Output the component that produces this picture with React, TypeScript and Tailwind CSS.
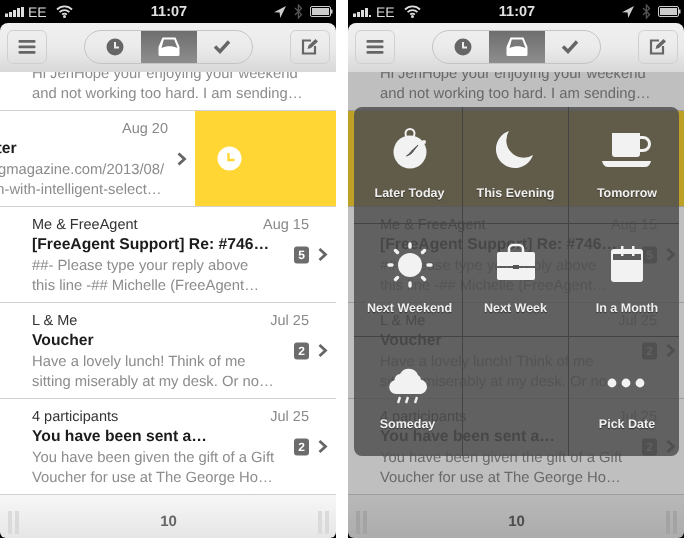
const ROWS = [
  {
    sender: "Natasha",
    date: "Jul 30",
    title: "Files for you",
    lines: ["Hi JenHope your enjoying your weekend", "and not working too hard. I am sending…"],
  },
  {
    sender: "Vitaly",
    date: "Aug 20",
    title: "Email Newsletter",
    lines: ["at www.smashingmagazine.com/2013/08/", "improving-search-with-intelligent-select…"],
    swiped: true,
  },
  {
    sender: "Me & FreeAgent",
    date: "Aug 15",
    title: "[FreeAgent Support] Re: #746…",
    lines: ["##- Please type your reply above", "this line -## Michelle (FreeAgent…"],
    count: 5,
  },
  {
    sender: "L & Me",
    date: "Jul 25",
    title: "Voucher",
    lines: ["Have a lovely lunch! Think of me", "sitting miserably at my desk. Or no…"],
    count: 2,
  },
  {
    sender: "4 participants",
    date: "Jul 25",
    title: "You have been sent a…",
    lines: ["You have been given the gift of a Gift", "Voucher for use at The George Ho…"],
    count: 2,
  },
]

function Chevron() {
  return (
    <svg width="10" height="14" viewBox="0 0 10 14">
      <path d="M1.500 1.500l6 5.500-6 5.500" fill="none" stroke="#666" strokeWidth="2.800" />
    </svg>
  )
}

function StatusBar({ dot }: { dot?: boolean }) {
  return (
    <div className="h-[23px] shrink-0 flex items-center justify-between pl-[5px] pr-[3px] text-white">
      <div className="w-[100px] flex items-center">
        <svg width="20" height="12" viewBox="0 0 20 12" fill="#ddd">
          <rect x="0" y="7.500" width="3" height="3.500" />
          <rect x="4" y="6" width="3" height="5" />
          <rect x="8" y="4" width="3" height="7" />
          <rect x="12" y="2" width="3" height="9" />
          {dot ? <rect x="16" y="9" width="2" height="2" /> : <rect x="16" y="1" width="3" height="10" />}
        </svg>
        <span className="ml-[3px] text-[14px] font-normal leading-none text-[#ddd]">EE</span>
        <svg className="ml-[9px]" width="17" height="13" viewBox="0 0 17 13" fill="none" stroke="#ddd" strokeWidth="1.800">
          <path d="M1 4.500a10.500 10.500 0 0 1 15 0" />
          <path d="M3.600 7.200a7 7 0 0 1 9.800 0" />
          <path d="M6.200 9.700a3.200 3.200 0 0 1 4.600 0" />
          <circle cx="8.500" cy="11.500" r="0.600" fill="#ddd" />
        </svg>
      </div>
      <span className="pt-[1px] text-[14.500px] font-bold leading-none text-[#e0e0e0]">11:07</span>
      <div className="w-[100px] flex items-center justify-end">
        <svg width="12" height="12" viewBox="0 0 12 12" fill="#ccc">
          <path d="M12 0L0 6.200l5.600.4.600 5.400z" />
        </svg>
        <svg className="ml-[8px]" width="9" height="15" viewBox="0 0 9 15" fill="none" stroke="#555" strokeWidth="1.300">
          <path d="M1 4l6.500 6.500L4.400 14V1l3.100 3.500L1 11" />
        </svg>
        <svg className="ml-[7px]" width="23" height="11" viewBox="0 0 23 11" fill="none">
          <rect x="0.500" y="0.500" width="20" height="10" rx="1.500" stroke="#ccc" />
          <rect x="2" y="2" width="17" height="7" fill="#ccc" />
          <rect x="21" y="3.500" width="1.500" height="4" fill="#ccc" />
        </svg>
      </div>
    </div>
  )
}

function Toolbar() {
  return (
    <div className="h-[49px] shrink-0 flex items-center justify-between pl-[7px] pr-[6px] pb-[2px] bg-gradient-to-b from-[#f0f0f0] via-[#ebebeb] to-[#d8d8d8] relative z-10">
      <div className="w-[40px] h-[34px] rounded-[6px] border border-[#d0d0d0] flex items-center justify-center">
        <svg width="18" height="16" viewBox="0 0 18 16" fill="#666">
          <rect x="0.500" y="1" width="17" height="2.800" rx="1" />
          <rect x="0.500" y="6.500" width="17" height="2.800" rx="1" />
          <rect x="0.500" y="12" width="17" height="2.800" rx="1" />
        </svg>
      </div>
      <div className="w-[169px] h-[34px] rounded-full border border-[#c4c4c4] flex overflow-hidden">
        <div className="flex-1 flex items-center justify-center pl-[5px]">
          <svg width="18" height="18" viewBox="0 0 18 18">
            <circle cx="9" cy="9" r="8.500" fill="#666" />
            <path d="M9 4v5.500h4" fill="none" stroke="#eee" strokeWidth="2" />
          </svg>
        </div>
        <div className="w-[56px] flex items-center justify-center bg-gradient-to-b from-[#6e6e6e] to-[#8e8e8e]">
          <svg width="22" height="19" viewBox="0 0 22 19">
            <path d="M4.500 0.500h13l4 9.500v7.500a1.500 1.500 0 0 1-1.500 1.500H2a1.500 1.500 0 0 1-1.500-1.500V10z" fill="#fff" />
            <path d="M5.800 2.500h10.400l3.300 8.500c-5-2.500-11-2.500-16 0z" fill="#7a7a7a" />
          </svg>
        </div>
        <div className="flex-1 flex items-center justify-center pr-[5px]">
          <svg width="18" height="15" viewBox="0 0 18 15">
            <path d="M2 7.500l5 5L16 2.500" fill="none" stroke="#666" strokeWidth="3.400" />
          </svg>
        </div>
      </div>
      <div className="w-[40px] h-[34px] rounded-[6px] border border-[#d0d0d0] flex items-center justify-center">
        <svg width="18" height="17" viewBox="0 0 18 17" fill="none">
          <path d="M10 2.500H2v13h12V8" stroke="#666" strokeWidth="2.200" />
          <path d="M6.500 11l1-3.500L14.500 1 17 3.500 10 10z" fill="#666" />
        </svg>
      </div>
    </div>
  )
}

function Row({ row, first, snooze }: { row: (typeof ROWS)[number]; first?: boolean; snooze?: boolean }) {
  const body = (
    <div className="relative w-[336px] h-[95px] shrink-0 pl-[32px] pr-[27px] pt-[8px] text-[14.500px] leading-[20.4px] whitespace-nowrap">
      <div className="flex justify-between">
        <span className="text-[#333]">{row.sender}</span>
        <span className="text-[#8a8a8a]">{row.date}</span>
      </div>
      <div className="text-[15.700px] font-bold text-[#1c1c1c]">{row.title}</div>
      {row.lines.map((l) => (
        <div key={l} className="text-[14.800px] text-[#8c8c8c]">
          {l}
        </div>
      ))}
      <div className="absolute right-[8px] top-1/2 -translate-y-1/2 flex items-center gap-[9px]">
        {row.count && (
          <span className="w-[15px] h-[17px] rounded-[3px] bg-[#6c6c6c] text-white text-[12px] font-bold leading-[17px] text-center">
            {row.count}
          </span>
        )}
        <Chevron />
      </div>
    </div>
  )

  // behind the snooze panel the whole swiped row has gone yellow
  if (row.swiped && snooze) {
    return <div className="h-[96px] border-b border-[#d2d2d2] bg-[#ffd633]" />
  }

  return (
    <div className={`h-[96px] border-b border-[#d2d2d2] bg-white flex ${first ? "-mt-[57px]" : ""}`}>
      {row.swiped ? (
        <>
          <div className="-ml-[141px]">{body}</div>
          <div className="w-[141px] shrink-0 bg-[#ffd633] flex items-center pl-[22px]">
            <svg width="25" height="25" viewBox="0 0 25 25">
              <circle cx="12.500" cy="12.500" r="12" fill="#fff" />
              <path d="M11.500 7v7h6" fill="none" stroke="#ffd633" strokeWidth="2.400" />
            </svg>
          </div>
        </>
      ) : (
        body
      )}
    </div>
  )
}

function Footer() {
  const grip = (
    <div className="flex gap-[3px]">
      <div className="w-[4px] h-[23px] bg-[#dadada]" />
      <div className="w-[4px] h-[23px] bg-[#dadada]" />
    </div>
  )
  return (
    <div className="flex-1 flex items-center justify-between pl-[8px] pr-[7px] pt-[11px] bg-gradient-to-b from-[#f7f7f7] to-[#e6e6e6] rounded-b-[6px]">
      {grip}
      <span className="text-[15px] font-bold text-[#666]">10</span>
      {grip}
    </div>
  )
}

const SNOOZE = [
  {
    label: "Later Today",
    cell: "pl-[3px] pt-[18px]",
    icon: (
      <>
        <circle cx="30" cy="8.500" r="4.500" fill="none" stroke="#f2f2f2" strokeWidth="2" />
        <circle cx="44" cy="17" r="2" />
        <circle cx="30" cy="27" r="16.500" />
        <path d="M38 20l-7 6.500-1.500 2-3 2.500 4-1.800 2-2z" fill="#555" stroke="#555" />
      </>
    ),
  },
  {
    label: "This Evening",
    cell: "pt-[18px]",
    icon: <path d="M23 6A19 19 0 1 0 47 30A17.400 17.400 0 0 1 23 6z" />,
  },
  {
    label: "Tomorrow",
    cell: "pl-[6px] pt-[18px]",
    icon: (
      <>
        <path d="M15 8h28v21a3 3 0 0 1-3 3H18a3 3 0 0 1-3-3z" />
        <path d="M43 12.500h3a5.500 5.500 0 0 1 0 13h-3" fill="none" stroke="#f2f2f2" strokeWidth="3" />
        <path d="M5 36h49c-1 4-3 6-6 6H11c-3 0-5-2-6-6z" />
      </>
    ),
  },
  {
    label: "Next Weekend",
    cell: "pl-[3px] pt-[16px]",
    icon: (
      <>
        <circle cx="30" cy="25" r="12" />
        <g stroke="#f2f2f2" strokeWidth="3.400" strokeLinecap="round">
          <path d="M30 4v3M30 43v3M9 25h3M48 25h3M15.500 10.500l2 2M42.500 37.500l2 2M44.500 10.500l-2 2M17.500 37.500l-2 2" />
        </g>
      </>
    ),
  },
  {
    label: "Next Week",
    cell: "pt-[16px]",
    icon: (
      <>
        <path d="M23 12V9a4 4 0 0 1 4-4h6a4 4 0 0 1 4 4v3" fill="none" stroke="#f2f2f2" strokeWidth="2.500" />
        <path d="M11 14a2 2 0 0 1 2-2h34a2 2 0 0 1 2 2v12H11z" />
        <path d="M11 28h38v10a2 2 0 0 1-2 2H13a2 2 0 0 1-2-2z" />
        <rect x="27" y="25" width="6" height="4" fill="#555" />
      </>
    ),
  },
  {
    label: "In a Month",
    cell: "pl-[6px] pt-[16px]",
    icon: (
      <>
        <path d="M17 9h26a3 3 0 0 1 3 3v27a3 3 0 0 1-3 3H17a3 3 0 0 1-3-3V12a3 3 0 0 1 3-3z" />
        <rect x="16" y="14" width="28" height="6" fill="#5c5c5c" />
        <rect x="24" y="6" width="2.500" height="10" />
        <rect x="35" y="6" width="2.500" height="10" />
      </>
    ),
  },
  {
    label: "Someday",
    cell: "pt-[19px] -ml-[1px]",
    icon: (
      <>
        <path d="M18 38a7 7 0 0 1-1.500-13.800A6 6 0 0 1 22 18a10 10 0 0 1 18 1 6 6 0 0 1 3 4.800A7.200 7.200 0 0 1 43 38z" />
        <path d="M22 41l-2 6M30 41l-2 6M39 41l-2 6" stroke="#f2f2f2" strokeWidth="2.400" />
      </>
    ),
  },
  { label: "", cell: "", icon: null },
  {
    label: "Pick Date",
    cell: "pl-[6px] pt-[19px]",
    icon: (
      <>
        <circle cx="15" cy="27" r="4.400" />
        <circle cx="29" cy="27" r="4.400" />
        <circle cx="43" cy="27" r="4.400" />
      </>
    ),
  },
]

function SnoozePanel() {
  return (
    <>
      <div className="absolute inset-x-0 top-[23px] bottom-0 bg-black/25 rounded-t-[6px]" />
      <div className="absolute left-[6px] top-[107px] w-[325px] h-[349px] rounded-[8px] overflow-hidden bg-[#505050]/[0.85] grid grid-cols-[109px_106px_110px] grid-rows-[117px_113px_119px]">
        {SNOOZE.map((s, i) => (
          <div
            key={i}
            className={`flex flex-col items-center border-[#444444] ${i % 3 < 2 ? "border-r" : ""} ${i < 6 ? "border-b" : ""} ${s.cell}`}
          >
            {s.icon && (
              <svg width="60" height="54" viewBox="0 0 60 54" fill="#f2f2f2">
                {s.icon}
              </svg>
            )}
            <span className="mt-[7px] text-[12.500px] leading-[14px] font-bold text-[#f0f0f0] whitespace-nowrap [text-shadow:0_1px_1px_rgba(0,0,0,0.5)]">
              {s.label}
            </span>
          </div>
        ))}
      </div>
    </>
  )
}

function Phone({ snooze }: { snooze?: boolean }) {
  return (
    <div className="relative w-[336px] h-[538px] shrink-0 bg-black flex flex-col overflow-hidden">
      <StatusBar dot={snooze} />
      <div className="flex-1 flex flex-col rounded-t-[8px] overflow-hidden">
        <Toolbar />
        <div className="h-[423px] shrink-0 overflow-hidden">
          {ROWS.map((r, i) => (
            <Row key={r.title} row={r} first={i === 0} snooze={snooze} />
          ))}
        </div>
        <Footer />
      </div>
      {snooze && <SnoozePanel />}
    </div>
  )
}

export default function App() {
  return (
    <div className="w-[684px] h-[538px] bg-white flex gap-[12px] overflow-hidden blur-[0.35px] [text-rendering:geometricPrecision] font-['Liberation_Sans',Arial,sans-serif]">
      <Phone />
      <Phone snooze />
    </div>
  )
}
